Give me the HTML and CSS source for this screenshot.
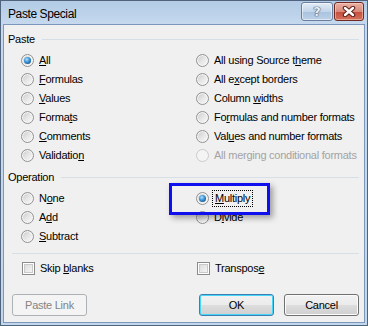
FILE: index.html
```html
<!DOCTYPE html>
<html lang="en">
  <head>
    <meta charset="UTF-8" />
    <title>Paste Special</title>
    <link rel="stylesheet" href="styles.css">
  </head>
  <body>
    <div class="window">
      <div class="titlebar">
        <span class="title">Paste Special</span>
        <div class="caption-buttons">
          <div class="cap-btn help"><span>?</span></div>
          <div class="cap-btn close">
            <svg width="14" height="11" viewBox="0 0 14 11">
              <path d="M3 2L11 9M11 2L3 9" stroke="#5b1e17" stroke-width="4.4" stroke-linecap="round"/>
              <path d="M3 2L11 9M11 2L3 9" stroke="#ffffff" stroke-width="2.4" stroke-linecap="round"/>
            </svg>
          </div>
        </div>
      </div>

      <div class="client">
        <div class="group-label"><span>Paste</span><div class="rule"></div></div>
        <div class="options">
          <div class="opt"><span class="radio on"></span><span><u>A</u>ll</span></div>
          <div class="opt"><span class="radio"></span><span>All using Source t<u>h</u>eme</span></div>
          <div class="opt"><span class="radio"></span><span><u>F</u>ormulas</span></div>
          <div class="opt"><span class="radio"></span><span>All e<u>x</u>cept borders</span></div>
          <div class="opt"><span class="radio"></span><span><u>V</u>alues</span></div>
          <div class="opt"><span class="radio"></span><span>Column <u>w</u>idths</span></div>
          <div class="opt"><span class="radio"></span><span>Forma<u>t</u>s</span></div>
          <div class="opt"><span class="radio"></span><span>Fo<u>r</u>mulas and number formats</span></div>
          <div class="opt"><span class="radio"></span><span><u>C</u>omments</span></div>
          <div class="opt"><span class="radio"></span><span>Val<u>u</u>es and number formats</span></div>
          <div class="opt"><span class="radio"></span><span>Validatio<u>n</u></span></div>
          <div class="opt disabled"><span class="radio"></span><span>All merging conditional formats</span></div>
        </div>

        <div class="group-label op"><span>Operation</span><div class="rule"></div></div>
        <div class="options">
          <div class="opt"><span class="radio"></span><span>N<u>o</u>ne</span></div>
          <div class="opt"><span class="radio on"></span><span class="focus"><u>M</u>ultiply</span></div>
          <div class="opt"><span class="radio"></span><span>A<u>d</u>d</span></div>
          <div class="opt"><span class="radio"></span><span>D<u>i</u>vide</span></div>
          <div class="opt"><span class="radio"></span><span><u>S</u>ubtract</span></div>
        </div>

        <div class="separator"></div>

        <div class="options checks">
          <div class="opt"><span class="check"></span><span>Skip <u>b</u>lanks</span></div>
          <div class="opt"><span class="check"></span><span>Transpos<u>e</u></span></div>
        </div>

        <div class="actions">
          <button class="btn" disabled>Paste Link</button>
          <button class="btn default">OK</button>
          <button class="btn">Cancel</button>
        </div>

        <div class="highlight"></div>
      </div>
    </div>
  </body>
</html>
```

FILE: styles.css
```css
:root {
  --frame: #c2d6ec;
  --panel: #f0f0f0;
  --rule: #d5dfe5;
  --text: #000000;
  --muted: #a3a3a3;
}

html,
body {
  margin: 0;
  padding: 0;
  background: #ffffff;
}

body {
  font-family: "Liberation Sans", Arial, sans-serif;
  font-size: 11px;
  letter-spacing: -0.25px;
  color: var(--text);
}

.window {
  width: 368px;
  height: 326px;
  box-sizing: border-box;
  border: 1px solid #4f637d;
  background: linear-gradient(#b3cbe6, #c6d9ee 24px, var(--frame));
  padding: 0 2px 2px 2px;
  display: flex;
  flex-direction: column;
}

/* title bar */
.titlebar {
  height: 23px;
  display: flex;
  align-items: flex-start;
  padding-left: 5px;
  padding-right: 1px;
}

.title {
  font-size: 12px;
  letter-spacing: -0.4px;
  line-height: 14px;
  margin-top: 6px;
}

.caption-buttons {
  margin-left: auto;
  margin-top: 1px;
  display: flex;
  gap: 1px;
}

.cap-btn {
  height: 19px;
  box-sizing: border-box;
  border: 1px solid #6b7f9b;
  border-radius: 3px;
  display: flex;
  align-items: center;
  justify-content: center;
}

.cap-btn.help {
  width: 32px;
  background: linear-gradient(#e3ecf7, #c3d5ea 50%, #a9c2de 51%, #bcd1e8);
  box-shadow: inset 0 0 0 1px rgba(255, 255, 255, 0.5);
}

.cap-btn.help span {
  font-family: "DejaVu Sans", sans-serif;
  font-weight: bold;
  font-size: 13px;
  color: #e9f0f8;
  text-shadow: 0 0 1px #3d4f66, 0 0 1px #3d4f66, 0 0 1px #3d4f66;
}

.cap-btn.close {
  width: 30px;
  border-color: #6e2a22;
  background: linear-gradient(#eab2a5, #d98a7a 50%, #c64b3b 51%, #d4735c);
  box-shadow: inset 0 0 0 1px rgba(255, 220, 210, 0.5);
}

/* client area */
.client {
  flex: 1;
  position: relative;
  background: var(--panel);
  border: 1px solid #7b97ba;
  padding: 8px 5px 6px 4px;
  display: flex;
  flex-direction: column;
}

.group-label {
  display: flex;
  align-items: center;
  height: 13px;
  line-height: 13px;
}

.group-label.op {
  margin-top: 6px;
}

.rule {
  flex: 1;
  height: 1px;
  background: var(--rule);
  margin-left: 7px;
}

.options {
  display: grid;
  grid-template-columns: 175px auto;
  grid-auto-rows: 19px;
  padding-left: 13px;
  margin-top: 5px;
}

.opt {
  display: flex;
  align-items: center;
  gap: 5px;
  line-height: 13px;
}

.opt u {
  text-decoration-thickness: 1px;
  text-underline-offset: 1px;
}

.opt.disabled {
  color: var(--muted);
}

.radio {
  width: 13px;
  height: 13px;
  box-sizing: border-box;
  border-radius: 50%;
  border: 1px solid #929292;
  background: linear-gradient(135deg, #c9c9c9 0, #e6e6e6 50%, #fbfbfb 100%);
  box-shadow: inset 0 0 0 1px #f6f6f6;
  display: flex;
  align-items: center;
  justify-content: center;
  flex-shrink: 0;
}

.radio.on::after {
  content: "";
  width: 7px;
  height: 7px;
  border-radius: 50%;
  background: radial-gradient(circle at 40% 35%, #b6e3ff 0, #4aa3e0 35%, #1b5d98 75%, #123f6e 100%);
}

.disabled .radio {
  border-color: #cbcbcb;
  background: #f4f4f4;
  box-shadow: none;
}

.focus {
  outline: 1px dotted #000000;
  outline-offset: 1px;
  padding: 0 1px;
}

.separator {
  height: 1px;
  background: var(--rule);
  margin: 7px 0 0 4px;
}

.checks {
  padding-left: 14px;
}

.check {
  width: 13px;
  height: 13px;
  box-sizing: border-box;
  border: 1px solid #8b8b8b;
  background: linear-gradient(135deg, #d6d6d6, #fafafa);
  box-shadow: inset 0 0 0 1px #ffffff, inset 0 0 0 2px #c9c9c9;
  flex-shrink: 0;
}

/* buttons */
.actions {
  display: flex;
  gap: 10px;
  margin-top: auto;
  padding-left: 4px;
}

.btn {
  width: 75px;
  height: 22px;
  border-radius: 3px;
  border: 1px solid #707070;
  background: linear-gradient(#f2f2f2, #ebebeb 50%, #dddddd 51%, #cfcfcf);
  box-shadow: inset 0 0 0 1px #fcfcfc;
  font-family: "Liberation Sans", Arial, sans-serif;
  font-size: 11px;
  letter-spacing: -0.25px;
  color: #000000;
  padding: 0;
}

.btn:first-child {
  margin-right: auto;
}

.btn:disabled {
  border-color: #adb2b5;
  background: #f4f4f4;
  box-shadow: none;
  color: #838383;
}

.btn.default {
  border-color: #3c7fb1;
  box-shadow: inset 0 0 0 1px #48d5fa;
}

/* annotation box */
.highlight {
  position: absolute;
  left: 165px;
  top: 158px;
  width: 101px;
  height: 32px;
  box-sizing: border-box;
  border: 3px solid #1010ee;
  box-shadow: 3px 3px 6px rgba(0, 0, 0, 0.35);
}
```
